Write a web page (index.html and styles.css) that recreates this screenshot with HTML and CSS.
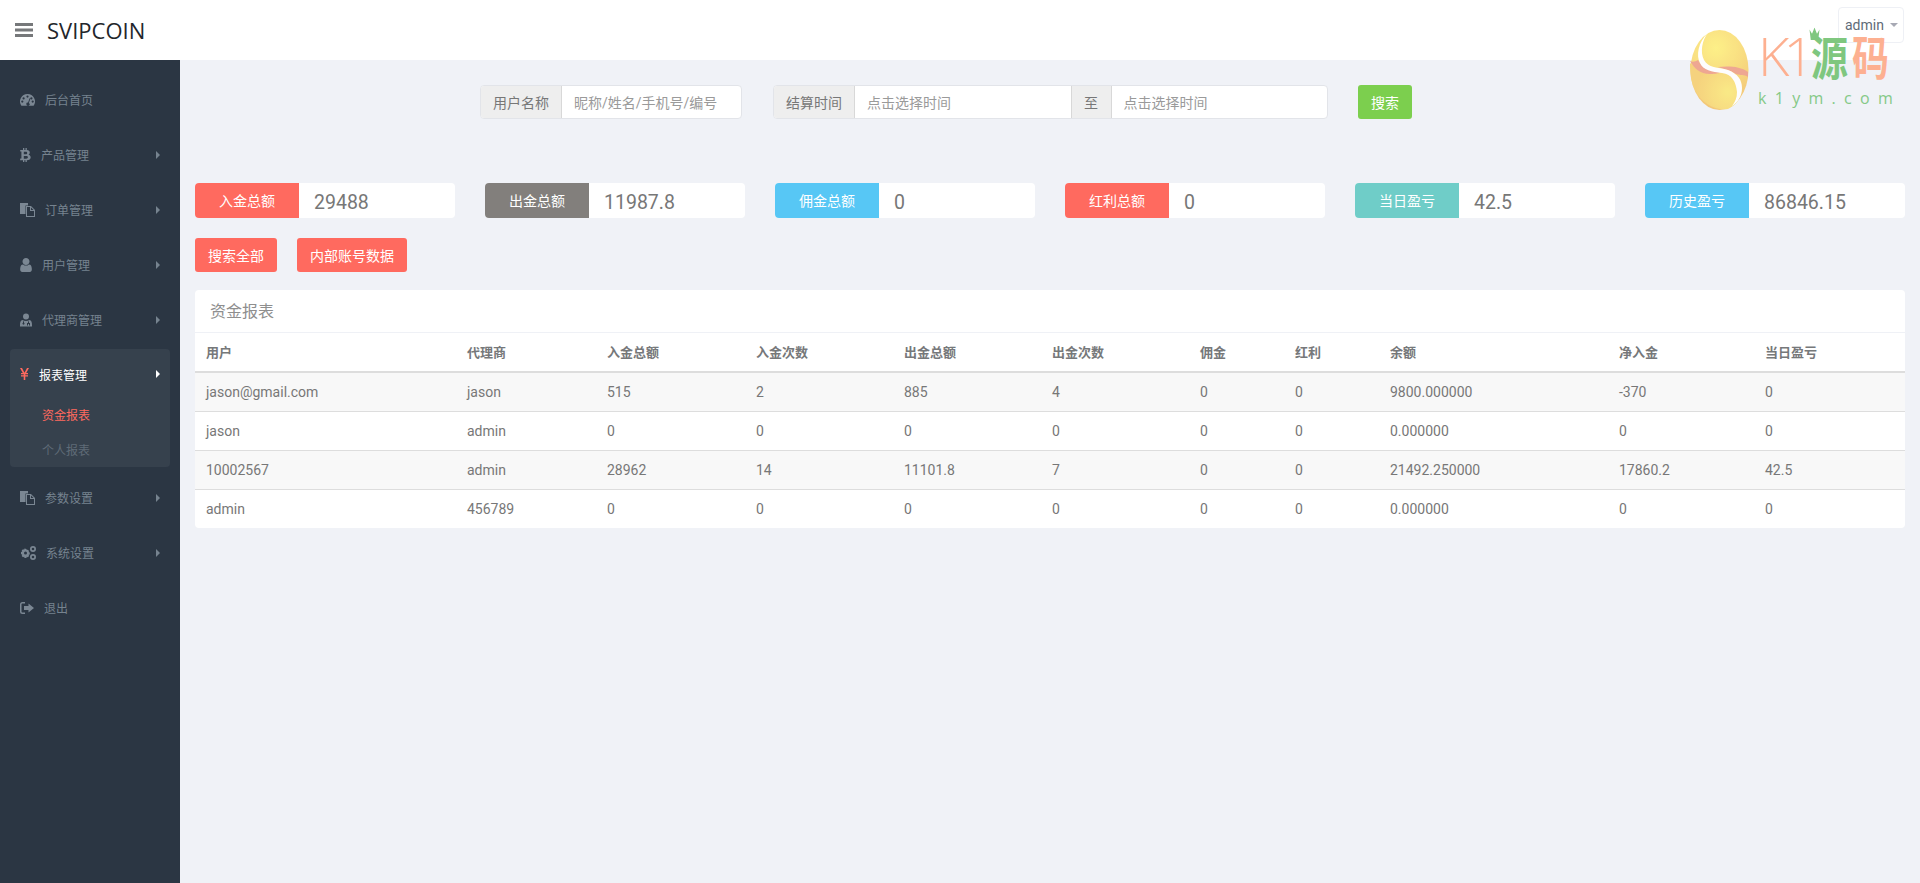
FILE: index.html
```html
<!DOCTYPE html>
<html lang="zh">
<head>
<meta charset="utf-8">
<title>SVIPCOIN</title>
<link rel="stylesheet" href="styles.css">
</head>
<body>
<header class="topbar">
  <div class="brand">
    <svg class="burger" viewBox="0 0 18 14"><path d="M0 0h18v3H0zM0 5.500h18v3H0zM0 11h18v3H0z"/></svg>
    <span class="brand-name">SVIPCOIN</span>
  </div>
  <div class="user-btn">admin<i class="caret"></i></div>
</header>
<div class="shell">
  <nav class="sidebar">
    <a class="item"><svg class="ico w15" viewBox="0 0 15 12"><path d="M7.500 0A7.500 7.500 0 0 0 1.400 11.800h12.200A7.500 7.500 0 0 0 7.500 0zM7.500 1.500a1.100 1.100 0 1 1 0 2.200 1.100 1.100 0 0 1 0-2.200zM3.600 3.300a1.100 1.100 0 1 1 0 2.200 1.100 1.100 0 0 1 0-2.200zm7.800 0a1.100 1.100 0 1 1 0 2.200 1.100 1.100 0 0 1 0-2.200zM2.300 6.500a1.100 1.100 0 1 1 0 2.200 1.100 1.100 0 0 1 0-2.200zm10.400 0a1.100 1.100 0 1 1 0 2.200 1.100 1.100 0 0 1 0-2.200zM9.600 4.300l.8.300-1.500 4.300a1.600 1.600 0 1 1-.8-.3z" fill-rule="evenodd"/></svg><span>后台首页</span></a>
    <a class="item"><svg class="ico w11" viewBox="0 0 11 14"><path d="M3 0h1.300v2H5.500V0h1.300v2.100C8.700 2.300 9.800 3.100 9.800 4.600c0 1-.5 1.700-1.300 2.100 1.300.3 2.200 1.200 2.200 2.600 0 1.900-1.400 2.800-3.900 2.900V14H5.500v-1.800H4.300V14H3v-1.800H0l.3-1.700h1.100V3.600H.2V2H3zM3.800 3.800v2.500h2.100c.8 0 1.300-.5 1.300-1.250S6.700 3.800 5.900 3.800zm0 4.200v2.700h2.400c1 0 1.700-.5 1.700-1.350S7.200 8 6.200 8z" fill-rule="evenodd"/></svg><span>产品管理</span><i class="arrow"></i></a>
    <a class="item"><svg class="ico w15" viewBox="0 0 15 14"><path d="M0 0h8v2.500H5.500V11H0zM6 3h5l4 4v7H6zM7 4v9h7V8h-4V4zm4 .5V7h2.500z" fill-rule="evenodd"/></svg><span>订单管理</span><i class="arrow"></i></a>
    <a class="item"><svg class="ico w12" viewBox="256 128 1280 1536"><path d="M1536 1399q0 109-62.500 187t-150.500 78h-854q-88 0-150.500-78t-62.500-187q0-85 8.500-160.500t31.500-152 58.500-131 94-89 134.500-34.500q131 128 313 128t313-128q76 0 134.500 34.500t94 89 58.500 131 31.500 152 8.500 160.500zm-256-887q0 159-112.500 271.500t-271.500 112.500-271.500-112.500-112.500-271.500 112.500-271.500 271.500-112.500 271.500 112.500 112.500 271.500z"/></svg><span>用户管理</span><i class="arrow"></i></a>
    <a class="item"><svg class="ico w12" viewBox="0 0 12 13"><path d="M6 0a3 3 0 1 1 0 6 3 3 0 0 1 0-6zM2.500 6.500C3.500 7.200 4.700 7.500 6 7.500s2.500-.3 3.500-1C11.300 7 12 8.500 12 11.500V13H0v-1.500C0 8.500.7 7 2.500 6.500zM3 7.800v1.500a1 1 0 1 0 1 0V7.900zm5 .1v1.600H7V12h1v-1.500h1V12h1V9.500H9V7.800z" fill-rule="evenodd"/></svg><span>代理商管理</span><i class="arrow"></i></a>
    <div class="group">
      <a class="item active"><svg class="ico w9" viewBox="0 0 9 12"><path d="M0 0h2l2.500 4.700L7 0h2L6.200 5H8v1.200H5.300v1H8v1.200H5.300V12H3.700V8.400H1V7.200h2.700v-1H1V5h1.800z"/></svg><span>报表管理</span><i class="arrow"></i></a>
      <a class="sub current">资金报表</a>
      <a class="sub">个人报表</a>
    </div>
    <a class="item"><svg class="ico w15" viewBox="0 0 15 14"><path d="M0 0h8v2.500H5.500V11H0zM6 3h5l4 4v7H6zM7 4v9h7V8h-4V4zm4 .5V7h2.500z" fill-rule="evenodd"/></svg><span>参数设置</span><i class="arrow"></i></a>
    <a class="item"><svg class="ico w16" viewBox="0 0 16 14"><path d="M5.500 2.800l.9.100.4 1.200 1-.4 1.300 1.300-.5 1 1.200.5v1.900l-1.200.4.500 1.100-1.300 1.300-1-.5-.4 1.200H4.500l-.4-1.200-1.100.5-1.300-1.300.5-1.100L1 7.900V6l1.200-.5-.5-1L3 3.200l1.100.5.400-1.200zM5.500 5.500a1.500 1.500 0 1 0 0 3 1.500 1.500 0 0 0 0-3zM13 0a3 3 0 1 1 0 6 3 3 0 0 1 0-6zm0 1.700a1.300 1.300 0 1 0 0 2.600 1.300 1.300 0 0 0 0-2.600zM13 8a3 3 0 1 1 0 6 3 3 0 0 1 0-6zm0 1.700a1.300 1.300 0 1 0 0 2.600 1.300 1.300 0 0 0 0-2.600z" fill-rule="evenodd"/></svg><span>系统设置</span><i class="arrow"></i></a>
    <a class="item"><svg class="ico w14" viewBox="0 0 14 12"><path d="M5 0v1.500H2.500c-.6 0-1 .4-1 1v7c0 .6.400 1 1 1H5V12H2.500A2.500 2.500 0 0 1 0 9.500v-7A2.500 2.500 0 0 1 2.500 0zM8.500 1.500L14 6l-5.500 4.500V8H4V4h4.500z"/></svg><span>退出</span></a>
  </nav>
  <main class="content">
    <form class="filters">
      <div class="igroup g-user">
        <span class="addon">用户名称</span>
        <span class="field">昵称/姓名/手机号/编号</span>
      </div>
      <div class="igroup g-time">
        <span class="addon">结算时间</span>
        <span class="field">点击选择时间</span>
        <span class="addon addon-mid">至</span>
        <span class="field">点击选择时间</span>
      </div>
      <button type="button" class="btn btn-green">搜索</button>
    </form>
    <section class="stats">
      <div class="stat"><span class="stat-label red">入金总额</span><span class="stat-val">29488</span></div>
      <div class="stat"><span class="stat-label gray">出金总额</span><span class="stat-val">11987.8</span></div>
      <div class="stat"><span class="stat-label blue">佣金总额</span><span class="stat-val">0</span></div>
      <div class="stat"><span class="stat-label red">红利总额</span><span class="stat-val">0</span></div>
      <div class="stat"><span class="stat-label teal">当日盈亏</span><span class="stat-val">42.5</span></div>
      <div class="stat"><span class="stat-label blue">历史盈亏</span><span class="stat-val">86846.15</span></div>
    </section>
    <div class="actions">
      <button type="button" class="btn btn-red">搜索全部</button>
      <button type="button" class="btn btn-red">内部账号数据</button>
    </div>
    <section class="panel">
      <h2 class="panel-title">资金报表</h2>
      <table class="report">
        <thead>
          <tr><th>用户</th><th>代理商</th><th>入金总额</th><th>入金次数</th><th>出金总额</th><th>出金次数</th><th>佣金</th><th>红利</th><th>余额</th><th>净入金</th><th>当日盈亏</th></tr>
        </thead>
        <tbody>
          <tr><td>jason@gmail.com</td><td>jason</td><td>515</td><td>2</td><td>885</td><td>4</td><td>0</td><td>0</td><td>9800.000000</td><td>-370</td><td>0</td></tr>
          <tr><td>jason</td><td>admin</td><td>0</td><td>0</td><td>0</td><td>0</td><td>0</td><td>0</td><td>0.000000</td><td>0</td><td>0</td></tr>
          <tr><td>10002567</td><td>admin</td><td>28962</td><td>14</td><td>11101.8</td><td>7</td><td>0</td><td>0</td><td>21492.250000</td><td>17860.2</td><td>42.5</td></tr>
          <tr><td>admin</td><td>456789</td><td>0</td><td>0</td><td>0</td><td>0</td><td>0</td><td>0</td><td>0.000000</td><td>0</td><td>0</td></tr>
        </tbody>
      </table>
    </section>
  </main>
</div>
<div class="watermark">
  <svg class="wm-logo" viewBox="0 0 60 80">
    <defs>
      <radialGradient id="eggTop" gradientUnits="userSpaceOnUse" cx="26" cy="18" r="55"><stop offset="0" stop-color="#fdef7c"/><stop offset="1" stop-color="#f4c46c"/></radialGradient>
      <radialGradient id="eggBottom" gradientUnits="userSpaceOnUse" cx="38" cy="62" r="32"><stop offset="0" stop-color="#fbe97a"/><stop offset="1" stop-color="#f6cf72"/></radialGradient>
    </defs>
    <ellipse cx="29.500" cy="40" rx="29" ry="40" fill="url(#eggTop)"/>
    <path d="M10 38C20 44 34 40 42 44 50 48 52 56 50 66 48 72 44 76 38 79 26 81 12 74 5 60 1 52 0 44 0 33 3 36 6 37 10 38z" fill="url(#eggBottom)"/>
    <path d="M0 31C4 38 10 44 20 44 26 44 28 43 30 43 20 38 12 38 8 30 5 32 2 32 0 31z" fill="#ee9f88"/>
    <path d="M28 37C38 36 50 36 58 42L58 47C54 44 50 46 46 44 40 40 34 39 28 37z" fill="#ee9f88"/>
    <path d="M18 3C8 12 6 26 10 33 13 40 22 42 32 43 42 44 46 52 47 62 47 68 45 72 42 76 48 72 52 66 52 58 52 50 48 44 38 40 28 37 18 38 14 30 10 22 12 10 18 3z" fill="#fff"/>
  </svg>
  <div class="wm-text">
    <div class="wm-top">
      <span class="wm-k">K1</span>
      <span class="wm-y">源<svg class="wm-crown" viewBox="0 0 14 12"><path d="M7 0l1.500 3L10 6l3-4-1.500 10h-9L1 2l3 4 1.500-3z"/></svg></span>
      <span class="wm-m">码</span>
    </div>
    <div class="wm-url">k1ym.com</div>
  </div>
</div>
</body>
</html>
```
FILE: styles.css
```css
* { box-sizing: border-box; }
html, body { margin: 0; height: 100%; }
body {
  font-family: "Roboto", "Noto Sans CJK SC", sans-serif;
  font-size: 12px;
  color: #76838f;
  background: #f0f2f7;
  overflow: hidden;
  position: relative;
}
.topbar {
  height: 60px;
  background: #fff;
  display: flex;
  justify-content: space-between;
  align-items: flex-start;
  padding: 7px 16px 0 15px;
}
.brand { display: flex; align-items: center; height: 46px; gap: 14px; }
.burger { width: 18px; height: 14px; fill: #76787a; }
.brand-name { font-size: 22px; color: #23262b; font-family: "Open Sans", sans-serif; }
.user-btn {
  width: 66px;
  height: 36px;
  border: 1px solid #eef0f5;
  border-radius: 4px;
  font-size: 14px;
  color: #5e6b78;
  display: flex;
  align-items: center;
  padding-left: 6px;
  gap: 6px;
}
.caret { width: 0; height: 0; border: 4px solid transparent; border-top-color: #a7a9b4; margin-top: 4px; }
.shell { display: flex; height: 823px; }
.sidebar {
  width: 180px;
  background: #2b3643;
  padding: 12px 10px 0;
  flex: none;
}
.item {
  display: flex;
  align-items: center;
  height: 55px;
  padding-left: 10px;
  gap: 10px;
  color: #76838f;
}
.ico { fill: #7b8793; flex: none; height: 14px; }
.w15 { width: 15px; }
.w11 { width: 11px; }
.w12 { width: 12px; }
.w9 { width: 9px; }
.w16 { width: 16px; }
.w14 { width: 14px; }
.arrow {
  margin-left: auto;
  margin-right: 10px;
  width: 0;
  height: 0;
  border: 4px solid transparent;
  border-left-color: #76838f;
  border-right-width: 0;
}
.group { background: #36414d; border-radius: 4px; height: 118px; margin: 2px 0 3px; }
.item.active { color: #fff; height: 50px; }
.item.active .ico { fill: #ff6a5f; }
.item.active .arrow { border-left-color: #fff; }
.sub { display: block; height: 35px; line-height: 35px; padding-left: 32px; color: #5f6b77; }
.sub.current { color: #ff6a5f; }
.content { flex: 1; padding: 0 15px; }
.filters {
  display: flex;
  height: 72px;
  padding: 25px 0 0 285px;
  align-items: flex-start;
}
.igroup {
  display: flex;
  height: 34px;
  border: 1px solid #e2e4e9;
  border-radius: 4px;
  background: #fff;
  overflow: hidden;
  font-size: 14px;
}
.g-user { width: 262px; margin-right: 31px; }
.g-time { width: 555px; margin-right: 30px; }
.addon {
  flex: none;
  width: 81px;
  display: flex;
  align-items: center;
  justify-content: center;
  background: #eeeeee;
  color: #777777;
  border-right: 1px solid #d8d8d8;
}
.addon-mid { width: 41px; border-left: 1px solid #d8d8d8; }
.field { flex: 1; display: flex; align-items: center; padding-left: 12px; color: #9a9a9a; }
.btn {
  border: 0;
  border-radius: 3px;
  color: #fff;
  font: inherit;
  font-size: 14px;
  padding: 0;
  height: 34px;
}
.btn-green { background: #7ccf4e; width: 54px; }
.btn-red { background: #ff6a5f; padding: 0 13px; }
.stats { display: flex; justify-content: space-between; margin-top: 51px; }
.stat {
  width: 260px;
  height: 35px;
  background: #fff;
  border-radius: 4px;
  overflow: hidden;
  display: flex;
  align-items: center;
}
.stat-label {
  width: 104px;
  height: 100%;
  padding-bottom: 2px;
  color: #fff;
  font-size: 14px;
  display: flex;
  align-items: center;
  justify-content: center;
}
.red { background: #ff6a5f; }
.gray { background: #827f7c; }
.blue { background: #57c7f5; }
.teal { background: #6fcdc8; }
.stat-val { font-size: 19.500px; color: #777777; padding: 3px 0 0 15px; }
.actions { display: flex; gap: 20px; margin-top: 20px; }
.panel { margin-top: 18px; background: #fff; border-radius: 4px; overflow: hidden; }
.panel-title {
  margin: 0;
  height: 43px;
  line-height: 43px;
  padding-left: 15px;
  font-size: 16px;
  font-weight: 400;
  color: #8e8e8e;
  border-bottom: 1px solid #eff1f6;
}
.report { width: 100%; border-collapse: collapse; table-layout: fixed; font-size: 14px; color: #777777; }
.report th {
  height: 39px;
  text-align: left;
  padding: 0 11px 2px;
  font-weight: 700;
  color: #76787a;
  font-size: 13px;
  border-bottom: 2px solid #dddddd;
}
.report td { height: 39px; padding: 0 11px; border-bottom: 1px solid #dddddd; }
.report tr:last-child td { border-bottom: 0; }
.report tbody tr:nth-child(odd) { background: #f8f8f8; }
.report th:nth-child(1) { width: 261px; }
.report th:nth-child(2) { width: 140px; }
.report th:nth-child(3) { width: 149px; }
.report th:nth-child(4) { width: 148px; }
.report th:nth-child(5) { width: 148px; }
.report th:nth-child(6) { width: 148px; }
.report th:nth-child(7) { width: 95px; }
.report th:nth-child(8) { width: 95px; }
.report th:nth-child(9) { width: 229px; }
.report th:nth-child(10) { width: 146px; }
.watermark {
  position: absolute;
  left: 1690px;
  top: 30px;
  display: flex;
  gap: 8px;
  pointer-events: none;
}
.wm-logo { width: 60px; height: 80px; opacity: .9; flex: none; }
.wm-text { display: flex; flex-direction: column; padding-top: 2px; }
.wm-top { height: 46px; line-height: 46px; display: flex; }
.wm-k {
  color: #fdb091;
  font-family: "Open Sans", sans-serif;
  font-weight: 300;
  font-size: 54px;
  letter-spacing: -6px;
  width: 53px;
}
.wm-y, .wm-m {
  position: relative;
  display: block;
  width: 41px;
  font-family: "Noto Sans CJK SC", sans-serif;
  font-size: 37px;
  font-weight: 700;
  transform: scaleY(1.25);
}
.wm-y { color: #7fc77f; }
.wm-m { color: #fdb091; }
.wm-crown { position: absolute; left: -3px; top: 1px; width: 13px; height: 10px; fill: #7fc77f; }
.wm-url {
  margin-top: 10px;
  line-height: 20px;
  font-size: 16px;
  color: #85c987;
  letter-spacing: 8.300px;
  font-family: "Open Sans", sans-serif;
}
```
